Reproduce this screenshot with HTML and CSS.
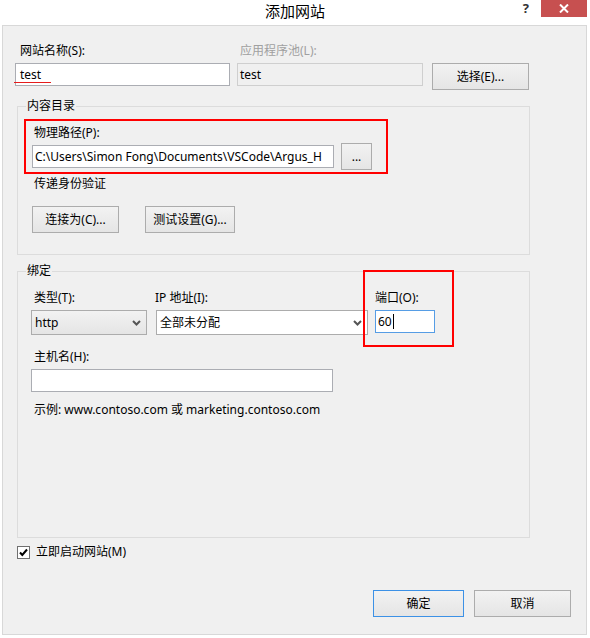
FILE: index.html
```html
<!DOCTYPE html>
<html lang="zh-CN">
<head>
    <meta charset="UTF-8">
    <title>添加网站</title>
    <link rel="stylesheet" href="styles.css">
</head>
<body>
    <div class="titlebar">
        <span></span>
        <h1 class="title">添加网站</h1>
        <div class="caption-buttons">
            <span class="help">?</span>
            <span class="close">
                <svg width="10" height="9" viewBox="0 0 10 9"><path d="M1 0.5 L9 8.5 M9 0.5 L1 8.5" stroke="#fff" stroke-width="2"/></svg>
            </span>
        </div>
    </div>

    <div class="dialog">
        <div class="site-row">
            <label class="field-label name-label">网站名称(S):</label>
            <label class="field-label pool-label disabled">应用程序池(L):</label>
            <span></span>
            <div class="textbox name-box">test</div>
            <div class="textbox readonly pool-box">test</div>
            <button class="btn pick-btn">选择(E)...</button>
        </div>

        <fieldset class="group content-group">
            <legend>内容目录</legend>
            <div class="highlight">
                <label class="field-label">物理路径(P):</label>
                <div class="path-row">
                    <div class="textbox path-box">C:\Users\Simon Fong\Documents\VSCode\Argus_H</div>
                    <button class="btn browse-btn">...</button>
                </div>
            </div>
            <p class="caption">传递身份验证</p>
            <div class="auth-buttons">
                <button class="btn connect-btn">连接为(C)...</button>
                <button class="btn test-btn">测试设置(G)...</button>
            </div>
        </fieldset>

        <fieldset class="group binding-group">
            <legend>绑定</legend>
            <div class="binding-row">
                <label class="field-label type-label">类型(T):</label>
                <label class="field-label ip-label">IP 地址(I):</label>
                <label class="field-label port-label">端口(O):</label>
                <div class="dropdown type-select">
                    <span>http</span>
                    <svg width="9" height="6" viewBox="0 0 9 6"><path d="M1 1 L4.5 4.5 L8 1" fill="none" stroke="#555" stroke-width="2"/></svg>
                </div>
                <div class="dropdown ip-select">
                    <span>全部未分配</span>
                    <svg width="9" height="6" viewBox="0 0 9 6"><path d="M1 1 L4.5 4.5 L8 1" fill="none" stroke="#555" stroke-width="2"/></svg>
                </div>
                <div class="textbox port-box">60<span class="caret"></span></div>
            </div>
            <label class="field-label host-label">主机名(H):</label>
            <div class="textbox host-box"></div>
            <p class="caption example">示例: www.contoso.com 或 marketing.contoso.com</p>
        </fieldset>

        <div class="check-row">
            <span class="checkbox">
                <svg width="11" height="11" viewBox="0 0 11 11"><path d="M2 5.5 L4.3 8 L9 2.5" fill="none" stroke="#000" stroke-width="2"/></svg>
            </span>
            <span>立即启动网站(M)</span>
        </div>

        <div class="dialog-buttons">
            <button class="btn default-btn">确定</button>
            <button class="btn cancel-btn">取消</button>
        </div>
    </div>
</body>
</html>
```

FILE: styles.css
```css
body {
    margin: 0;
    background: #fff;
    font-family: "Noto Sans", "Noto Sans CJK SC", sans-serif;
    font-size: 12px;
    line-height: 16px;
    color: #000;
}
.titlebar {
    display: grid;
    grid-template-columns: 1fr auto 1fr;
    height: 25px;
}
.title {
    margin: 0;
    padding-top: 2px;
    font-size: 15px;
    font-weight: normal;
    line-height: 18px;
    font-family: "Noto Sans CJK SC", sans-serif;
}
.caption-buttons {
    display: flex;
    justify-content: flex-end;
    align-items: flex-start;
    padding-right: 3px;
}
.help {
    font-weight: bold;
    font-size: 13px;
    line-height: 15px;
    padding-top: 1px;
    color: #333;
    margin-right: 12px;
}
.close {
    width: 46px;
    height: 17px;
    background: #c75050;
    display: flex;
    align-items: center;
    justify-content: center;
}
.dialog {
    margin-left: 2px;
    width: 585px;
    height: 610px;
    box-sizing: border-box;
    background: #f0f0f0;
    border: 1px solid #d8d8d8;
    padding: 17px 15px 0 14px;
}
.field-label {
    display: block;
    white-space: nowrap;
}
.disabled {
    color: #a0a0a0;
}
.textbox {
    box-sizing: border-box;
    height: 23px;
    line-height: 21px;
    background: #fff;
    border: 1px solid #abadb3;
    padding-left: 2px;
    white-space: nowrap;
    overflow: hidden;
}
.readonly {
    background: #f0f0f0;
    border-color: #cfcfcf;
}
.btn {
    box-sizing: border-box;
    height: 27px;
    border: 1px solid #acacac;
    background: linear-gradient(#f2f2f2, #e5e5e5);
    font: inherit;
    color: #000;
    padding: 0;
}

/* site name / application pool */
.site-row {
    display: grid;
    grid-template-columns: 215px 186px 97px;
    column-gap: 7px;
    row-gap: 4px;
    align-items: start;
    margin-left: -2px;
}
.name-label {
    padding-left: 5px;
}
.pool-label {
    padding-left: 3px;
}
.name-box {
    position: relative;
    overflow: visible;
    padding-left: 4px;
}
.name-box::after {
    content: "";
    position: absolute;
    left: -2px;
    top: 18px;
    width: 37px;
    height: 1px;
    background: #e51c1c;
}
.pick-btn {
    margin-left: 2px;
    width: 97px;
}

/* group boxes */
.group {
    margin: 8px 0 0;
    width: 513px;
    box-sizing: border-box;
    border: 1px solid #dcdcdc;
    padding: 5px 0 21px 6px;
}
.group legend {
    padding: 0 1px;
    margin-left: 2px;
    line-height: 16px;
}
.highlight {
    width: 364px;
    box-sizing: border-box;
    border: 2px solid #f00;
    padding: 4px 0 2px 6px;
}
.highlight .field-label {
    padding-left: 2px;
}
.path-row {
    display: flex;
    align-items: center;
    gap: 7px;
    margin-top: 2px;
}
.path-box {
    width: 302px;
}
.browse-btn {
    width: 31px;
}
.caption {
    margin: 2px 0 0 10px;
}
.auth-buttons {
    display: flex;
    gap: 26px;
    margin: 14px 0 0 8px;
}
.connect-btn {
    width: 87px;
}
.test-btn {
    width: 90px;
}

/* bindings */
.binding-group {
    padding: 11px 0 119px 13px;
}
.binding-group legend {
    margin-left: -5px;
}
.binding-row {
    display: grid;
    grid-template-columns: 116px 212px 58px;
    column-gap: 9px;
    row-gap: 4px;
    align-items: start;
}
.binding-row > :nth-child(3n) {
    margin-left: -2px;
}
.type-label {
    padding-left: 3px;
}
.ip-label {
    margin-left: -1px;
}
.port-label {
    position: relative;
}
.port-label::after {
    content: "";
    position: absolute;
    left: -12px;
    top: -20px;
    width: 87px;
    height: 73px;
    border: 2px solid #f00;
}
.dropdown {
    box-sizing: border-box;
    height: 25px;
    border: 1px solid #acacac;
    background: #fff;
    display: flex;
    align-items: center;
    justify-content: space-between;
    padding: 0 5px 0 3px;
}
.type-select {
    background: linear-gradient(#f2f2f2, #e5e5e5);
}
.port-box {
    border-color: #569de5;
    padding-left: 2px;
    display: flex;
    align-items: center;
}
.caret {
    width: 1px;
    height: 15px;
    background: #000;
    margin-left: 1px;
}
.host-label {
    margin: 14px 0 4px 3px;
}
.host-box {
    width: 302px;
}
.example {
    margin: 10px 0 0 3px;
}

/* footer */
.check-row {
    display: flex;
    align-items: center;
    gap: 6px;
    margin-top: 6px;
    line-height: 16px;
}
.checkbox {
    width: 13px;
    height: 13px;
    box-sizing: border-box;
    border: 1px solid #707070;
    background: #fff;
    display: flex;
    align-items: center;
    justify-content: center;
}
.dialog-buttons {
    display: flex;
    justify-content: flex-end;
    gap: 10px;
    margin-top: 30px;
}
.default-btn {
    width: 91px;
    border-color: #3c91e6;
}
.cancel-btn {
    width: 97px;
}
```
